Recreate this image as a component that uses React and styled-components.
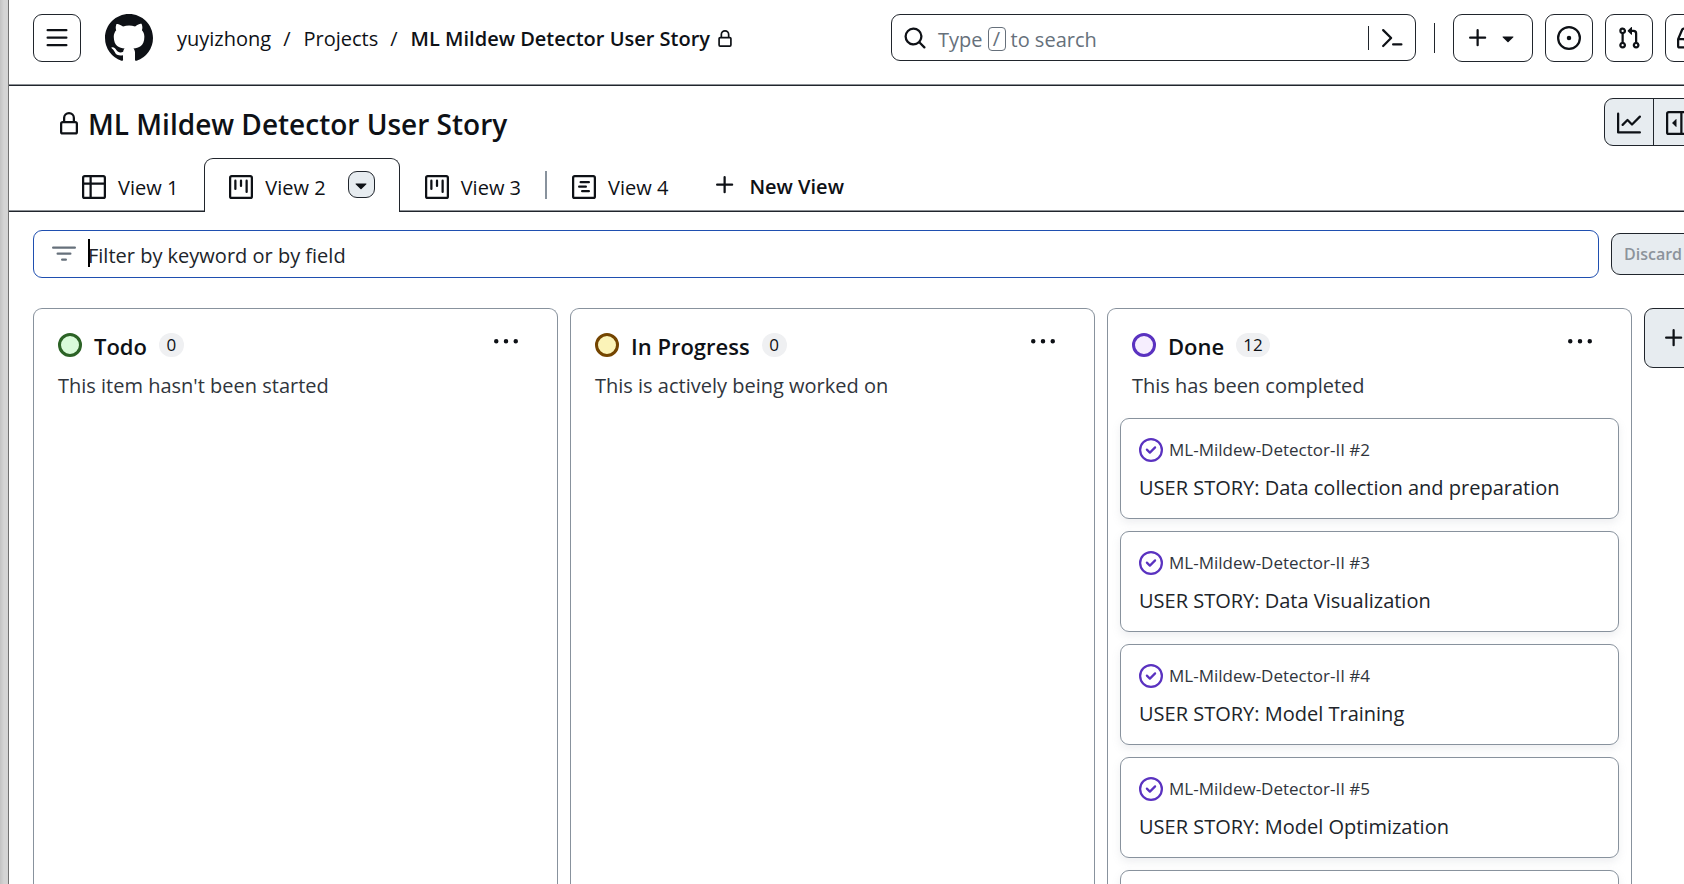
import React from "react";
import styled, { createGlobalStyle, css } from "styled-components";

const ink = "#0e1116";
const line = "#20252c";
const muted = "#66707b";
const soft = "#88929d";
const surface = "#e7ecf0";

const GlobalStyle = createGlobalStyle`
  *, *::before, *::after { box-sizing: border-box; }
  body { margin: 0; background: #fff; }
  body, button, input { font-family: "Open Sans", "Noto Sans", sans-serif; color: ${ink}; }
  button { padding: 0; background: none; border: 0; cursor: pointer; }
  h1, h2, p, ul, ol { margin: 0; padding: 0; list-style: none; }
  a { color: inherit; text-decoration: none; }
`;

const PATHS = {
  bars: "M1 2.75A.75.75 0 0 1 1.75 2h12.5a.75.75 0 0 1 0 1.5H1.75A.75.75 0 0 1 1 2.75Zm0 5A.75.75 0 0 1 1.75 7h12.5a.75.75 0 0 1 0 1.5H1.75A.75.75 0 0 1 1 7.75ZM1.75 12h12.5a.75.75 0 0 1 0 1.5H1.75a.75.75 0 0 1 0-1.5Z",
  github: "M8 0c4.42 0 8 3.58 8 8a8.013 8.013 0 0 1-5.45 7.59c-.4.08-.55-.17-.55-.38 0-.27.01-1.13.01-2.2 0-.75-.25-1.23-.54-1.48 1.78-.2 3.65-.88 3.65-3.95 0-.88-.31-1.59-.82-2.15.08-.2.36-1.02-.08-2.12 0 0-.67-.22-2.2.82-.64-.18-1.32-.27-2-.27-.68 0-1.36.09-2 .27-1.53-1.03-2.2-.82-2.2-.82-.44 1.1-.16 1.92-.08 2.12-.51.56-.82 1.28-.82 2.15 0 3.06 1.86 3.75 3.64 3.95-.23.2-.44.55-.51 1.07-.46.21-1.61.55-2.33-.66-.15-.24-.6-.83-1.23-.82-.67.01-.27.38.01.53.34.19.73.9.82 1.13.16.45.68 1.31 2.69.94 0 .67.01 1.3.01 1.49 0 .21-.15.45-.55.38A7.995 7.995 0 0 1 0 8c0-4.42 3.58-8 8-8Z",
  lock: "M4 4a4 4 0 0 1 8 0v2h.25c.966 0 1.75.784 1.75 1.75v5.5A1.75 1.75 0 0 1 12.25 15h-8.5A1.75 1.75 0 0 1 2 13.25v-5.5C2 6.784 2.784 6 3.75 6H4Zm8.25 3.5h-8.5a.25.25 0 0 0-.25.25v5.5c0 .138.112.25.25.25h8.5a.25.25 0 0 0 .25-.25v-5.5a.25.25 0 0 0-.25-.25ZM10.5 6V4a2.5 2.5 0 1 0-5 0v2Z",
  search: "M10.68 11.74a6 6 0 0 1-7.922-8.982 6 6 0 0 1 8.982 7.922l3.04 3.04a.749.749 0 0 1-.326 1.275.749.749 0 0 1-.734-.215ZM11.5 7a4.499 4.499 0 1 0-8.997 0A4.499 4.499 0 0 0 11.5 7Z",
  command: "m6.354 8.04-4.773 4.773a.75.75 0 1 0 1.061 1.06L7.945 8.57a.75.75 0 0 0 0-1.06L2.642 2.206a.75.75 0 0 0-1.06 1.061L6.353 8.04ZM8.75 11.5a.75.75 0 0 0 0 1.5h5.5a.75.75 0 0 0 0-1.5h-5.5Z",
  plus: "M7.75 2a.75.75 0 0 1 .75.75V7h4.25a.75.75 0 0 1 0 1.5H8.5v4.25a.75.75 0 0 1-1.5 0V8.5H2.75a.75.75 0 0 1 0-1.5H7V2.75A.75.75 0 0 1 7.75 2Z",
  caret: "m4.427 7.427 3.396 3.396a.25.25 0 0 0 .354 0l3.396-3.396A.25.25 0 0 0 11.396 7H4.604a.25.25 0 0 0-.177.427Z",
  issue: "M8 9.5a1.5 1.5 0 1 0 0-3 1.5 1.5 0 0 0 0 3ZM8 0a8 8 0 1 1 0 16A8 8 0 0 1 8 0ZM1.5 8a6.5 6.5 0 1 0 13 0 6.5 6.5 0 0 0-13 0Z",
  pull: "M1.5 3.25a2.25 2.25 0 1 1 3 2.122v5.256a2.251 2.251 0 1 1-1.5 0V5.372A2.25 2.25 0 0 1 1.5 3.25Zm5.677-.177L9.573.677A.25.25 0 0 1 10 .854V2.5h1A2.5 2.5 0 0 1 13.5 5v5.628a2.251 2.251 0 1 1-1.5 0V5a1 1 0 0 0-1-1h-1v1.646a.25.25 0 0 1-.427.177L7.177 3.427a.25.25 0 0 1 0-.354ZM3.75 2.5a.75.75 0 1 0 0 1.5.75.75 0 0 0 0-1.5Zm0 9.5a.75.75 0 1 0 0 1.5.75.75 0 0 0 0-1.5Zm8.25.75a.75.75 0 1 0 1.5 0 .75.75 0 0 0-1.5 0Z",
  inbox: "M2.8 2.06A1.75 1.75 0 0 1 4.41 1h7.18c.7 0 1.333.417 1.61 1.06l2.74 6.395c.04.093.06.194.06.295v4.5A1.75 1.75 0 0 1 14.25 15H1.75A1.75 1.75 0 0 1 0 13.25v-4.5c0-.101.02-.202.06-.295Zm1.61.44a.25.25 0 0 0-.23.152L1.887 8H4.75a.75.75 0 0 1 .6.3L6.625 10h2.75l1.275-1.7a.75.75 0 0 1 .6-.3h2.863L11.82 2.652a.25.25 0 0 0-.23-.152Zm10.09 7h-2.875l-1.275 1.7a.75.75 0 0 1-.6.3h-3.5a.75.75 0 0 1-.6-.3L4.375 9.5H1.5v3.75c0 .138.112.25.25.25h12.5a.25.25 0 0 0 .25-.25Z",
  graph: "M1.5 1.75V13.5h13.75a.75.75 0 0 1 0 1.5H.75a.75.75 0 0 1-.75-.75V1.75a.75.75 0 0 1 1.5 0Zm14.28 2.53-5.25 5.25a.75.75 0 0 1-1.06 0L7 7.06 4.28 9.78a.751.751 0 0 1-1.042-.018.751.751 0 0 1-.018-1.042l3.25-3.25a.75.75 0 0 1 1.06 0L10 7.94l4.72-4.72a.751.751 0 0 1 1.042.018.751.751 0 0 1 .018 1.042Z",
  sidebar: "m4.177 7.823 2.396-2.396A.25.25 0 0 1 7 5.604v4.792a.25.25 0 0 1-.427.177L4.177 8.177a.25.25 0 0 1 0-.354ZM0 1.75C0 .784.784 0 1.75 0h12.5C15.216 0 16 .784 16 1.75v12.5A1.75 1.75 0 0 1 14.25 16H1.75A1.75 1.75 0 0 1 0 14.25Zm1.75-.25a.25.25 0 0 0-.25.25v12.5c0 .138.112.25.25.25H9.5v-13Zm12.5 13a.25.25 0 0 0 .25-.25V1.75a.25.25 0 0 0-.25-.25H11v13Z",
  table: "M0 1.75C0 .784.784 0 1.75 0h12.5C15.216 0 16 .784 16 1.75v12.5A1.75 1.75 0 0 1 14.25 16H1.75A1.75 1.75 0 0 1 0 14.25ZM6.5 6.5v8h7.75a.25.25 0 0 0 .25-.25V6.5Zm8-1.5V1.75a.25.25 0 0 0-.25-.25H6.5V5Zm-13 1.5v7.75c0 .138.112.25.25.25H5v-8ZM5 5V1.5H1.75a.25.25 0 0 0-.25.25V5Z",
  board: "M1.75 0h12.5C15.216 0 16 .784 16 1.75v12.5A1.75 1.75 0 0 1 14.25 16H1.75A1.75 1.75 0 0 1 0 14.25V1.75C0 .784.784 0 1.75 0ZM1.5 1.75v12.5c0 .138.112.25.25.25h12.5a.25.25 0 0 0 .25-.25V1.75a.25.25 0 0 0-.25-.25H1.75a.25.25 0 0 0-.25.25ZM11.75 3a.75.75 0 0 1 .75.75v7.5a.75.75 0 0 1-1.5 0v-7.5a.75.75 0 0 1 .75-.75Zm-8.25.75a.75.75 0 0 1 1.5 0v5.5a.75.75 0 0 1-1.5 0ZM8 3a.75.75 0 0 1 .75.75v3.5a.75.75 0 0 1-1.5 0v-3.5A.75.75 0 0 1 8 3Z",
  roadmap: "M1.75 0h12.5C15.216 0 16 .784 16 1.75v12.5A1.75 1.75 0 0 1 14.25 16H1.75A1.75 1.75 0 0 1 0 14.25V1.75C0 .784.784 0 1.75 0ZM1.5 1.75v12.5c0 .138.112.25.25.25h12.5a.25.25 0 0 0 .25-.25V1.75a.25.25 0 0 0-.25-.25H1.75a.25.25 0 0 0-.25.25ZM5.75 4h5.5a.75.75 0 0 1 0 1.5h-5.5a.75.75 0 0 1 0-1.5ZM4.75 7h4.5a.75.75 0 0 1 0 1.5h-4.5a.75.75 0 0 1 0-1.5ZM6.75 10h4.5a.75.75 0 0 1 0 1.5h-4.5a.75.75 0 0 1 0-1.5Z",
  filter: "M.75 3h14.5a.75.75 0 0 1 0 1.5H.75a.75.75 0 0 1 0-1.5ZM3 7.75A.75.75 0 0 1 3.75 7h8.5a.75.75 0 0 1 0 1.5h-8.5A.75.75 0 0 1 3 7.75Zm3 4a.75.75 0 0 1 .75-.75h2.5a.75.75 0 0 1 0 1.5h-2.5a.75.75 0 0 1-.75-.75Z",
  kebab: "M8 9a1.5 1.5 0 1 0 0-3 1.5 1.5 0 0 0 0 3ZM1.5 9a1.5 1.5 0 1 0 0-3 1.5 1.5 0 0 0 0 3Zm13 0a1.5 1.5 0 1 0 0-3 1.5 1.5 0 0 0 0 3Z",
  closed: "M11.28 6.78a.75.75 0 0 0-1.06-1.06L7.25 8.69 5.78 7.22a.75.75 0 0 0-1.06 1.06l2 2a.75.75 0 0 0 1.06 0l3.5-3.5ZM16 8A8 8 0 1 1 0 8a8 8 0 0 1 16 0Zm-1.5 0a6.5 6.5 0 1 0-13 0 6.5 6.5 0 0 0 13 0Z",
};

const Glyph = styled.svg`
  display: block;
  flex: none;
  fill: ${(p) => p.$color || ink};
`;

const Icon = ({ name, size = 24, color }) => (
  <Glyph viewBox="0 0 16 16" width={size} height={size} $color={color} aria-hidden="true">
    <path d={PATHS[name]} />
  </Glyph>
);

const Shell = styled.div`
  display: flex;
  height: 100vh;
  overflow: hidden;
`;

const WindowEdge = styled.div`
  flex: none;
  width: 9px;
  background: linear-gradient(90deg, #c2c2c2, #d4d4d4 4px);
  border-right: 1px solid #707070;
`;

/* The project page is wider than the window and runs off its right side. */
const Page = styled.div`
  flex: none;
  display: flex;
  flex-direction: column;
  width: calc(100% + 44px);
  min-height: 0;
`;

const ruled = css`
  border-bottom: 1px solid ${line};
  box-shadow: inset 0 -1px #8d9196;
`;

const Header = styled.header`
  display: flex;
  align-items: flex-start;
  flex: none;
  height: 86px;
  padding: 14px 24px 0;
  ${ruled}
`;

const SquareButton = styled.button`
  display: flex;
  align-items: center;
  justify-content: center;
  gap: 6px;
  flex: none;
  width: ${(p) => (p.$wide ? 80 : 48)}px;
  height: 48px;
  border: 1px solid ${line};
  border-radius: 9px;
`;

const HomeLink = styled.a`
  margin: 0 18px 0 24px;
`;

const Crumbs = styled.ol`
  display: flex;
  align-items: center;
  height: 50px;
  font-size: 20px;
  line-height: 30px;
  white-space: nowrap;
`;

const Crumb = styled.li`
  display: flex;
  align-items: center;
  gap: 6px;
  padding: 0 6px;
  font-weight: ${(p) => (p.$current ? 600 : 400)};
`;

const Slash = styled(Crumb)`
  padding-right: 7px;
`;

const Actions = styled.div`
  display: flex;
  align-items: center;
  gap: 12px;
  margin-left: auto;
`;

const SearchBox = styled.div`
  display: flex;
  align-items: center;
  width: 525px;
  height: 47px;
  margin-bottom: 1px;
  padding: 0 11px;
  border: 1px solid ${line};
  border-radius: 9px;
`;

const SearchTrigger = styled.button`
  display: flex;
  align-items: center;
  flex: 1;
  height: 100%;
  font-size: 20px;
  color: ${muted};
`;

const SearchText = styled.span`
  display: flex;
  align-items: center;
  gap: 5px;
  padding: 3px 0 0 11px;
`;

const Key = styled.kbd`
  width: 18px;
  height: 24px;
  border: 1px solid ${muted};
  border-radius: 4px;
  font: inherit;
  line-height: 22px;
  text-align: center;
`;

const PaletteButton = styled.button`
  padding-left: 11px;
  border-left: 1px solid ${line};
`;

const Rule = styled.span`
  width: 1px;
  height: 30px;
  margin: 0 6px;
  background: ${line};
`;

const TitleRow = styled.div`
  display: flex;
  justify-content: space-between;
  align-items: flex-start;
  flex: none;
  padding: 12px 35px 12px 48px;
`;

const Title = styled.h1`
  display: flex;
  align-items: center;
  gap: 7px;
  height: 52px;
  font-size: 28px;
  font-weight: 600;
  line-height: 40px;
`;

const ButtonGroup = styled.div`
  display: flex;
  border: 1px solid ${line};
  border-radius: 9px;
  background: ${surface};
`;

const GroupButton = styled.button`
  display: flex;
  align-items: center;
  justify-content: center;
  width: 48px;
  height: 46px;
  padding-top: 2px;

  & + & { border-left: 1px solid ${line}; }
`;

const Tabs = styled.nav`
  display: flex;
  align-items: stretch;
  flex: none;
  height: 54px;
  margin-top: -4px;
  padding-left: 48px;
  ${ruled}
`;

const TabItem = styled.div`
  display: flex;
  align-items: center;
  position: relative;
  padding: 3px 25px 0 24px;
  font-size: 20px;
  line-height: 30px;
  border: 1px solid transparent;
  border-bottom: 0;

  ${(p) => p.$active && css`
    margin-bottom: -1px;
    padding: 2px 24px 0;
    background: #fff;
    border-color: ${line};
    border-radius: 9px 9px 0 0;
  `}
`;

const TabLink = styled.a`
  display: flex;
  align-items: center;
  gap: 12px;
`;

const TabLabel = styled.span`
  padding-top: 2px;
`;

const TabMenu = styled.button`
  display: flex;
  align-items: center;
  justify-content: center;
  width: 27px;
  height: 27px;
  margin: 0 0 4px 22px;
  background: ${surface};
  border: 1px solid ${line};
  border-radius: 9px;
`;

const TabRule = styled.span`
  align-self: center;
  width: 2px;
  height: 28px;
  margin-left: -2px;
  background: ${soft};
`;

const NewView = styled.button`
  display: flex;
  align-items: center;
  gap: 12px;
  margin-left: 19px;
  padding-top: 1px;
  font-size: 20px;
  font-weight: 600;
`;

const FilterRow = styled.form`
  display: flex;
  align-items: center;
  gap: 12px;
  flex: none;
  padding: 18px 24px 30px;
`;

const FilterField = styled.label`
  display: flex;
  align-items: center;
  flex: 1;
  gap: 12px;
  height: 48px;
  padding: 0 18px;
  border: 1px solid #1f4fb0;
  border-radius: 9px;
`;

const InputWrap = styled.span`
  position: relative;
  flex: 1;
`;

const FilterInput = styled.input`
  display: block;
  width: 100%;
  height: 32px;
  padding: 2px 0 0;
  border: 0;
  outline: 0;
  background: none;
  font-size: 20px;

  &::placeholder { color: #20242a; opacity: 1; }
`;

const TextCursor = styled.span`
  position: absolute;
  left: 0;
  top: 1px;
  width: 2px;
  height: 28px;
  background: #000;
`;

const Discard = styled.button`
  width: 102px;
  height: 42px;
  padding-left: 12px;
  background: ${surface};
  border: 1px solid ${line};
  border-radius: 9px;
  font-size: 16px;
  font-weight: 600;
  text-align: left;
  color: #8c939b;
`;

const Board = styled.main`
  display: flex;
  flex: 1;
  gap: 12px;
  min-height: 0;
  padding: 0 24px;
`;

const Column = styled.section`
  flex: 1;
  min-width: 0;
  overflow: hidden;
  padding: 24px 12px 0;
  border: 1px solid ${soft};
  border-bottom: 0;
  border-radius: 9px 9px 0 0;
`;

const ColumnHead = styled.div`
  display: flex;
  align-items: center;
  gap: 12px;
  height: 24px;
  padding: 0 27px 0 12px;
`;

const Dot = styled.span`
  width: 24px;
  height: 24px;
  border: 3px solid ${(p) => p.$edge};
  border-radius: 50%;
  background: ${(p) => p.$fill};
`;

const ColumnName = styled.h2`
  padding-top: 2px;
  font-size: 22px;
  font-weight: 600;
  line-height: 28px;
`;

const Count = styled.span`
  min-width: 25px;
  height: 24px;
  padding: 0 7px;
  border-radius: 12px;
  background: #eff0f2;
  font-size: 17px;
  line-height: 24px;
  text-align: center;
`;

const Menu = styled.button`
  margin: -6px 0 0 auto;
`;

const Note = styled.p`
  padding: 14px 12px 17px;
  font-size: 20px;
  line-height: 30px;
  color: #30353c;
`;

const CardList = styled.ul`
  display: flex;
  flex-direction: column;
  gap: 12px;
`;

const Card = styled.li`
  min-height: 101px;
  padding: 16px 18px 0;
  border: 1px solid ${soft};
  border-radius: 9px;
  box-shadow: 0 4px 9px rgba(140, 149, 159, 0.15);
`;

const Reference = styled.div`
  display: flex;
  align-items: center;
  gap: 6px;
  font-size: 17px;
  line-height: 30px;
  color: #30353c;
`;

const Story = styled.a`
  display: block;
  padding-top: 8px;
  font-size: 20px;
  line-height: 30px;
  color: #20242a;
`;

const AddColumn = styled.button`
  display: flex;
  align-items: center;
  justify-content: center;
  flex: none;
  width: 69px;
  height: 60px;
  padding-right: 9px;
  background: ${surface};
  border: 1px solid ${line};
  border-radius: 9px;
`;

const stories = [
  { id: 2, title: "USER STORY: Data collection and preparation" },
  { id: 3, title: "USER STORY: Data Visualization" },
  { id: 4, title: "USER STORY: Model Training" },
  { id: 5, title: "USER STORY: Model Optimization" },
  { id: 6 },
];

const columns = [
  { name: "Todo", count: 0, note: "This item hasn't been started", edge: "#2c6326", fill: "#d9fbd9", cards: [] },
  { name: "In Progress", count: 0, note: "This is actively being worked on", edge: "#744500", fill: "#fbf3b8", cards: [] },
  { name: "Done", count: 12, note: "This has been completed", edge: "#5a32c0", fill: "#f6eefe", cards: stories },
];

const Tab = ({ icon, active, children }) => (
  <TabItem $active={active}>
    <TabLink href="#" aria-current={active ? "page" : undefined}>
      <Icon name={icon} />
      <TabLabel>{children}</TabLabel>
    </TabLink>
    {active && (
      <TabMenu aria-label="View options"><Icon name="caret" /></TabMenu>
    )}
  </TabItem>
);

export default function App() {
  return (
    <>
      <GlobalStyle />
      <Shell>
        <WindowEdge />
        <Page>
          <Header>
            <SquareButton aria-label="Open menu"><Icon name="bars" /></SquareButton>
            <HomeLink href="#" aria-label="Home"><Icon name="github" size={48} /></HomeLink>
            <Crumbs>
              <Crumb><a href="#">yuyizhong</a></Crumb>
              <Slash aria-hidden="true">/</Slash>
              <Crumb><a href="#">Projects</a></Crumb>
              <Slash aria-hidden="true">/</Slash>
              <Crumb $current>
                <a href="#">ML Mildew Detector User Story</a>
                <Icon name="lock" size={18} />
              </Crumb>
            </Crumbs>
            <Actions>
              <SearchBox>
                <SearchTrigger aria-label="Type / to search">
                  <Icon name="search" />
                  <SearchText>Type <Key>/</Key> to search</SearchText>
                </SearchTrigger>
                <PaletteButton aria-label="Command palette"><Icon name="command" /></PaletteButton>
              </SearchBox>
              <Rule />
              <SquareButton $wide aria-label="Create new">
                <Icon name="plus" />
                <Icon name="caret" />
              </SquareButton>
              <SquareButton aria-label="Issues"><Icon name="issue" /></SquareButton>
              <SquareButton aria-label="Pull requests"><Icon name="pull" /></SquareButton>
              <SquareButton aria-label="Notifications"><Icon name="inbox" /></SquareButton>
            </Actions>
          </Header>

          <TitleRow>
            <Title><Icon name="lock" />ML Mildew Detector User Story</Title>
            <ButtonGroup>
              <GroupButton aria-label="Insights"><Icon name="graph" /></GroupButton>
              <GroupButton aria-label="Project details"><Icon name="sidebar" /></GroupButton>
            </ButtonGroup>
          </TitleRow>

          <Tabs>
            <Tab icon="table">View 1</Tab>
            <Tab icon="board" active>View 2</Tab>
            <Tab icon="board">View 3</Tab>
            <TabRule />
            <Tab icon="roadmap">View 4</Tab>
            <NewView>
              <Icon name="plus" />
              <TabLabel>New View</TabLabel>
            </NewView>
          </Tabs>

          <FilterRow>
            <FilterField>
              <Icon name="filter" color={muted} />
              <InputWrap>
                <FilterInput aria-label="Filter" placeholder="Filter by keyword or by field" />
                <TextCursor />
              </InputWrap>
            </FilterField>
            <Discard type="button">Discard</Discard>
          </FilterRow>

          <Board>
            {columns.map((c) => (
              <Column key={c.name}>
                <ColumnHead>
                  <Dot $edge={c.edge} $fill={c.fill} />
                  <ColumnName>{c.name}</ColumnName>
                  <Count>{c.count}</Count>
                  <Menu aria-label="Column options"><Icon name="kebab" /></Menu>
                </ColumnHead>
                <Note>{c.note}</Note>
                <CardList>
                  {c.cards.map((card) => (
                    <Card key={card.id}>
                      {card.title && (
                        <>
                          <Reference>
                            <Icon name="closed" color="#5a32c0" />
                            ML-Mildew-Detector-II #{card.id}
                          </Reference>
                          <Story href="#">{card.title}</Story>
                        </>
                      )}
                    </Card>
                  ))}
                </CardList>
              </Column>
            ))}
            <AddColumn aria-label="Add column"><Icon name="plus" /></AddColumn>
          </Board>
        </Page>
      </Shell>
    </>
  );
}
